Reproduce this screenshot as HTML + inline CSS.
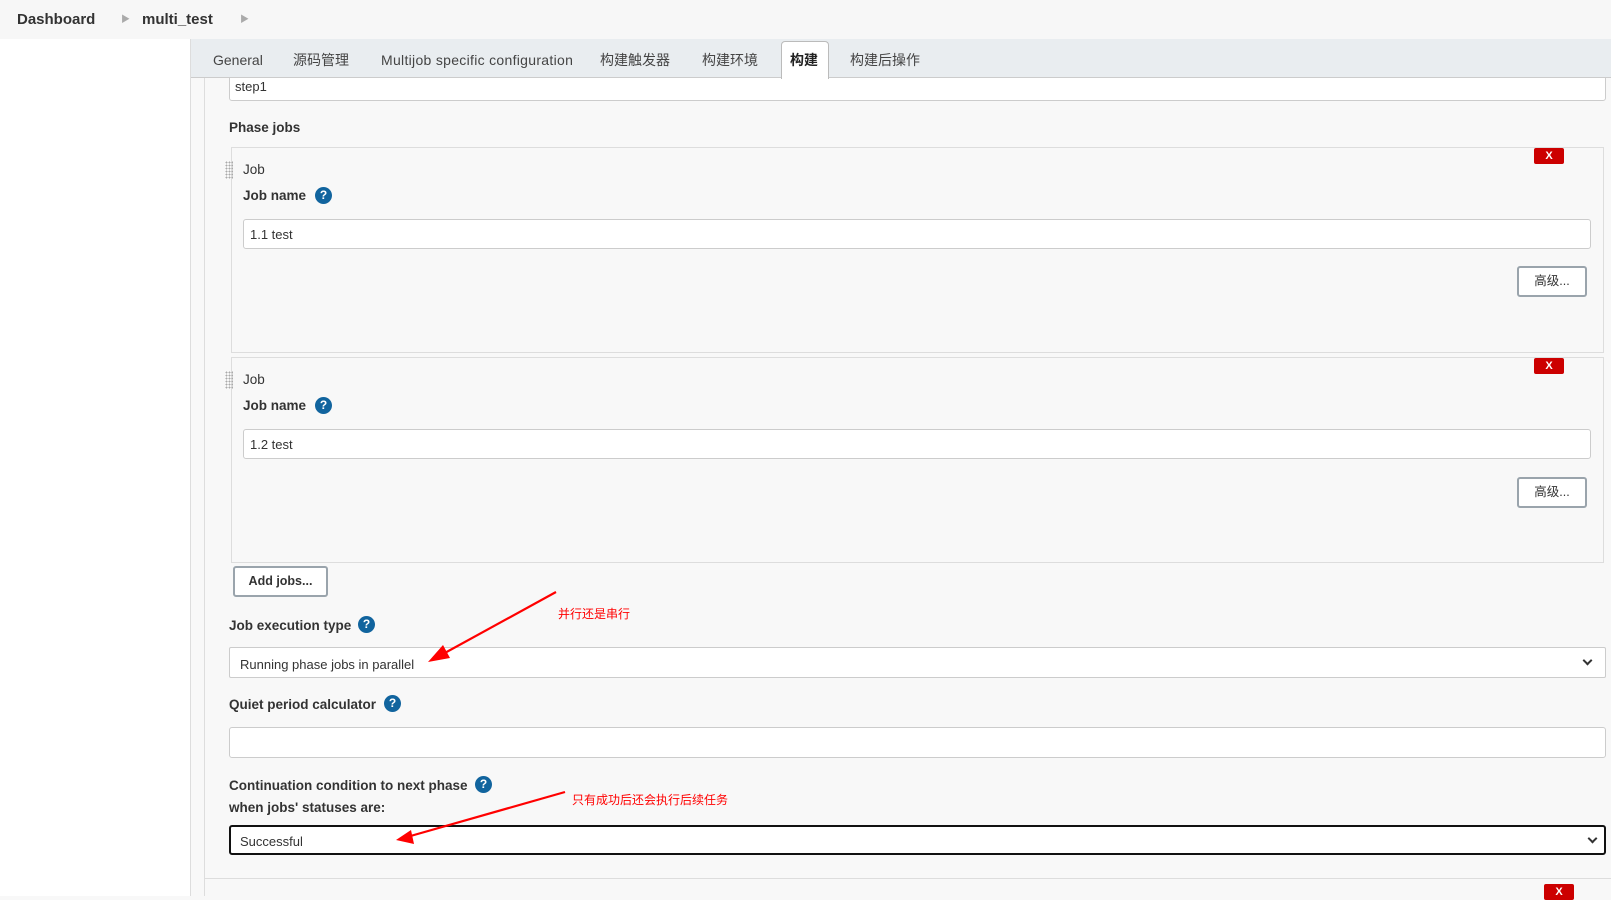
<!DOCTYPE html>
<html><head><meta charset="utf-8"><style>
*{box-sizing:border-box;margin:0;padding:0}
body{width:1611px;height:896px;overflow:hidden;background:#f8f8f8;font-family:"Liberation Sans","Noto Sans CJK SC",sans-serif;color:#333;font-size:13px;position:relative}
.a{position:absolute}
.top{left:0;top:0;width:1611px;height:39px;background:#f7f7f7}
.side{left:0;top:39px;width:191px;height:857px;background:#fff;border-right:1px solid #ddd}
.tabs{left:191px;top:39px;width:1420px;height:39px;background:#e9edf0;border-bottom:1px solid #ccc}
.tab{top:51px;font-size:14px;line-height:18px;height:18px;color:#444}
.inp{background:#fff;border:1px solid #ccc;border-radius:3px}
.box{border:1px solid #ddd;background:#f8f8f8}
.x{background:#c00;color:#fff;font-weight:bold;font-size:11px;text-align:center;line-height:16px;border-radius:2px;width:30px;height:16px}
.btn{background:#fff;border:2px solid #9aa4ac;border-radius:3px;text-align:center;font-size:12.5px;color:#333}
.lbl{font-weight:bold;font-size:13.5px;color:#333}
.help{width:17px;height:17px;border-radius:50%;background:#11649e;color:#fff;font-weight:bold;font-size:12px;text-align:center;line-height:17px}
.drag{width:8px;height:18px;background-image:radial-gradient(#aaa 40%,transparent 45%);background-size:3px 3px}
.chev{right:14px;top:9px;width:7px;height:7px;border-right:2px solid #333;border-bottom:2px solid #333;transform:rotate(45deg)}
.red{color:#f00;font-size:12px}
</style></head><body>
<div class="a top"></div>
<div class="a" style="left:17px;top:11px;font-weight:bold;font-size:15px;color:#333">Dashboard</div>
<div class="a" style="left:121px;top:12px;color:#aaa;font-size:9px">▶</div>
<div class="a" style="left:142px;top:11px;font-weight:bold;font-size:15px;color:#333">multi_test</div>
<div class="a" style="left:240px;top:12px;color:#aaa;font-size:9px">▶</div>
<div class="a side"></div>
<div class="a" style="left:204px;top:78px;width:1px;height:818px;background:#ddd"></div>
<div class="a inp" style="left:229px;top:70px;width:1377px;height:31px"></div>
<div class="a" style="left:235px;top:79px;font-size:13px">step1</div>
<div class="a tabs"></div>
<div class="a" style="left:781px;top:41px;width:48px;height:38px;background:#fff;border:1px solid #bbb;border-bottom:none;border-radius:4px 4px 0 0"></div>
<div class="a tab" style="left:213px">General</div>
<div class="a tab" style="left:293px">源码管理</div>
<div class="a tab" style="left:381px;letter-spacing:0.3px">Multijob specific configuration</div>
<div class="a tab" style="left:600px">构建触发器</div>
<div class="a tab" style="left:702px">构建环境</div>
<div class="a tab" style="left:790px;font-weight:bold;color:#222">构建</div>
<div class="a tab" style="left:850px">构建后操作</div>

<div class="a lbl" style="left:229px;top:120px">Phase jobs</div>

<div class="a box" style="left:231px;top:147px;width:1373px;height:206px"></div>
<div class="a drag" style="left:225px;top:161px"></div>
<div class="a" style="left:243px;top:162px;font-size:13.5px">Job</div>
<div class="a lbl" style="left:243px;top:188px">Job name</div>
<div class="a help" style="left:315px;top:187px">?</div>
<div class="a inp" style="left:243px;top:219px;width:1348px;height:30px"></div>
<div class="a" style="left:250px;top:227px;font-size:13px">1.1 test</div>
<div class="a btn" style="left:1517px;top:266px;width:70px;height:31px;line-height:27px">高级...</div>
<div class="a x" style="left:1534px;top:148px">X</div>

<div class="a box" style="left:231px;top:357px;width:1373px;height:206px"></div>
<div class="a drag" style="left:225px;top:371px"></div>
<div class="a" style="left:243px;top:372px;font-size:13.5px">Job</div>
<div class="a lbl" style="left:243px;top:398px">Job name</div>
<div class="a help" style="left:315px;top:397px">?</div>
<div class="a inp" style="left:243px;top:429px;width:1348px;height:30px"></div>
<div class="a" style="left:250px;top:437px;font-size:13px">1.2 test</div>
<div class="a btn" style="left:1517px;top:477px;width:70px;height:31px;line-height:27px">高级...</div>
<div class="a x" style="left:1534px;top:358px">X</div>

<div class="a btn" style="left:233px;top:566px;width:95px;height:31px;line-height:27px;font-weight:bold">Add jobs...</div>

<div class="a lbl" style="left:229px;top:618px">Job execution type</div>
<div class="a help" style="left:358px;top:616px">?</div>
<div class="a inp" style="left:229px;top:647px;width:1377px;height:31px;border-radius:2px"><div class="a chev"></div></div>
<div class="a" style="left:240px;top:657px;font-size:13px">Running phase jobs in parallel</div>

<div class="a lbl" style="left:229px;top:697px">Quiet period calculator</div>
<div class="a help" style="left:384px;top:695px">?</div>
<div class="a inp" style="left:229px;top:727px;width:1377px;height:31px"></div>

<div class="a lbl" style="left:229px;top:778px">Continuation condition to next phase</div>
<div class="a help" style="left:475px;top:776px">?</div>
<div class="a lbl" style="left:229px;top:800px">when jobs' statuses are:</div>
<div class="a" style="left:229px;top:825px;width:1377px;height:30px;background:#fff;border:2px solid #111;border-radius:3px"><div class="a chev" style="right:8px;top:8px"></div></div>
<div class="a" style="left:240px;top:834px;font-size:13px">Successful</div>

<div class="a" style="left:204px;top:878px;width:1407px;height:18px;border-top:1px solid #ddd;border-left:1px solid #ddd;background:#f8f8f8"></div>
<div class="a x" style="left:1544px;top:884px">X</div>

<div class="a red" style="left:558px;top:605px">并行还是串行</div>
<div class="a red" style="left:572px;top:791px">只有成功后还会执行后续任务</div>
<svg class="a" style="left:0;top:0" width="1611" height="896">
<line x1="556" y1="592" x2="432" y2="660" stroke="#f00" stroke-width="2.2"/>
<path d="M428,662 L443,645 L450,658 z" fill="#f00"/>
<line x1="565" y1="792" x2="400" y2="839" stroke="#f00" stroke-width="2.2"/>
<path d="M396,840 L411,830 L414,844 z" fill="#f00"/>
</svg>
</body></html>
